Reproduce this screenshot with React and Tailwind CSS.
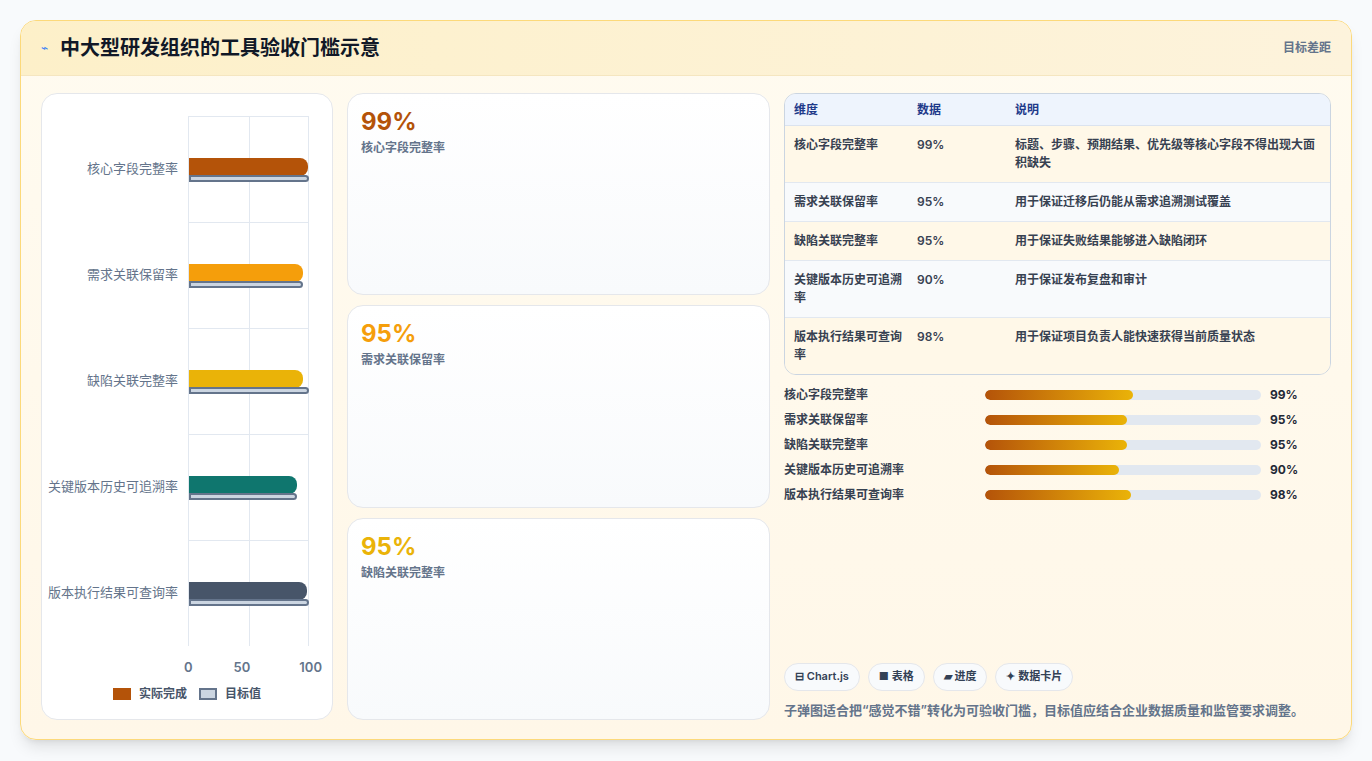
import React from "react";

const rows = [
  { name: "核心字段完整率", v: 99, color: "bg-[#b45309]", desc: "标题、步骤、预期结果、优先级等核心字段不得出现大面积缺失" },
  { name: "需求关联保留率", v: 95, color: "bg-[#f59e0b]", desc: "用于保证迁移后仍能从需求追溯测试覆盖" },
  { name: "缺陷关联完整率", v: 95, color: "bg-[#eab308]", desc: "用于保证失败结果能够进入缺陷闭环" },
  { name: "关键版本历史可追溯率", v: 90, color: "bg-[#0f766e]", desc: "用于保证发布复盘和审计" },
  { name: "版本执行结果可查询率", v: 98, color: "bg-[#475569]", desc: "用于保证项目负责人能快速获得当前质量状态" },
];
const targets = [100, 95, 100, 90, 100];

const cards = [
  { v: "99%", label: "核心字段完整率", c: "text-[#b45309]" },
  { v: "95%", label: "需求关联保留率", c: "text-[#f59e0b]" },
  { v: "95%", label: "缺陷关联完整率", c: "text-[#eab308]" },
];

export default function App() {
  return (
    <div className="w-[1372px] h-[761px] bg-[#f8fafc] p-5" style={{ fontFamily: "Inter, 'Noto Sans CJK SC', sans-serif" }}>
      <div className="h-[720px] rounded-2xl border border-[#fcd97a] bg-gradient-to-b from-[#fffbf0] to-[#fff7e8] shadow-lg overflow-hidden flex flex-col">
        <div className="h-[55px] shrink-0 flex items-center justify-between px-5 bg-gradient-to-r from-[#fdf0c9] to-[#fdf3dc] border-b border-[#f5e6c0]">
          <div className="flex items-center gap-3">
            <span className="text-[#3b82f6] text-xs">⌁</span>
            <h1 className="text-[20px] font-bold text-[#111827]">中大型研发组织的工具验收门槛示意</h1>
          </div>
          <span className="text-xs font-semibold text-[#64748b]">目标差距</span>
        </div>
        <div className="flex-1 flex gap-[14px] px-5 pt-[17px] pb-[19px]">
          {/* chart */}
          <div className="w-[292px] shrink-0 bg-white rounded-2xl border border-[#e5e7eb] pt-[22px] pb-4 flex flex-col overflow-hidden">
            <div className="flex h-[530px]">
              <div className="w-[146px] shrink-0 flex flex-col">
                {rows.map((r) => (
                  <div key={r.name} className="flex-1 flex items-center justify-end pr-[10px] overflow-hidden whitespace-nowrap text-[13px] text-[#64748b]">
                    {r.name}
                  </div>
                ))}
              </div>
              <div className="w-[121px] border-l border-t border-r border-[#e2e8f0] flex flex-col relative">
                <div className="absolute inset-y-0 left-[60px] border-l border-[#e2e8f0]" />
                {rows.map((r, i) => (
                  <div key={r.name} className="flex-1 flex flex-col justify-center border-b border-[#e2e8f0] last:border-b-0 relative">
                    <div className={`${r.color} h-[18px] rounded-r-lg`} style={{ width: `${r.v * 1.2}px` }} />
                    <div className="h-[7px] -mt-px bg-[#cbd5e1] border-2 border-[#64748b] rounded-r-sm" style={{ width: `${targets[i] * 1.2}px` }} />
                  </div>
                ))}
              </div>
            </div>
            <div className="flex ml-[140px] w-[140px] justify-between text-[13px] font-semibold text-[#64748b] mt-3">
              <span className="ml-[2px]">0</span>
              <span className="-ml-2">50</span>
              <span>100</span>
            </div>
            <div className="flex justify-center gap-2 mt-2 text-xs text-[#475569] font-semibold items-center">
              <span className="w-[18px] h-3 bg-[#b45309]" />
              <span>实际完成</span>
              <span className="w-[18px] h-3 bg-[#cbd5e1] border-2 border-[#64748b] ml-1" />
              <span>目标值</span>
            </div>
          </div>
          {/* cards */}
          <div className="w-[423px] shrink-0 flex flex-col gap-[10px]">
            {cards.map((c) => (
              <div key={c.label} className="flex-1 rounded-2xl border border-[#e5e7eb] bg-gradient-to-b from-white to-[#f8fafc] px-[13px] py-[10px]">
                <div className={`text-[24px] font-bold ${c.c}`}>{c.v}</div>
                <div className="text-xs text-[#64748b] font-semibold">{c.label}</div>
              </div>
            ))}
          </div>
          {/* right */}
          <div className="flex-1 flex flex-col">
            <div className="rounded-xl border border-[#cbd5e1] overflow-hidden text-xs">
              <div className="flex bg-[#eef4fd] h-8 items-center font-semibold text-[#1e3a8a] border-b border-[#dbe3ef]">
                <div className="w-[132px] pl-[9px]">维度</div>
                <div className="w-[98px]">数据</div>
                <div className="flex-1">说明</div>
              </div>
              {rows.map((r, i) => (
                <div key={r.name} className={`flex py-[10px] leading-[18px] font-semibold text-[#374151] border-b border-[#e2e8f0] last:border-b-0 ${i % 2 ? "bg-[#f8fafc]" : "bg-[#fff8e8]"}`}>
                  <div className="w-[132px] pl-[9px] pr-3">{r.name}</div>
                  <div className="w-[98px]">{r.v}%</div>
                  <div className="flex-1 pr-2">{r.desc}</div>
                </div>
              ))}
            </div>
            <div className="flex flex-col gap-[7px] mt-[11px]">
              {rows.map((r) => (
                <div key={r.name} className="flex items-center text-xs font-semibold text-[#374151] h-[18px]">
                  <div className="w-[201px]">{r.name}</div>
                  <div className="w-[276px] h-[10px] rounded-full bg-[#e2e8f0] overflow-hidden">
                    <div className="h-full rounded-full bg-gradient-to-r from-[#b45309] to-[#eab308]" style={{ width: `${r.v * 0.54}%` }} />
                  </div>
                  <div className="ml-[9px] text-[#1f2937] font-bold">{r.v}%</div>
                </div>
              ))}
            </div>
            <div className="mt-auto flex gap-[8px]">
              {["⊟ Chart.js", "■ 表格", "▰ 进度", "✦ 数据卡片"].map((t) => (
                <span key={t} className="px-[10px] h-[28px] flex items-center rounded-full bg-[#f8fafc] border border-[#e5e7eb] text-[11px] font-semibold text-[#334155]">{t}</span>
              ))}
            </div>
            <p className="mt-[10px] text-[13px] font-semibold text-[#64748b]">子弹图适合把“感觉不错”转化为可验收门槛，目标值应结合企业数据质量和监管要求调整。</p>
          </div>
        </div>
      </div>
    </div>
  );
}
